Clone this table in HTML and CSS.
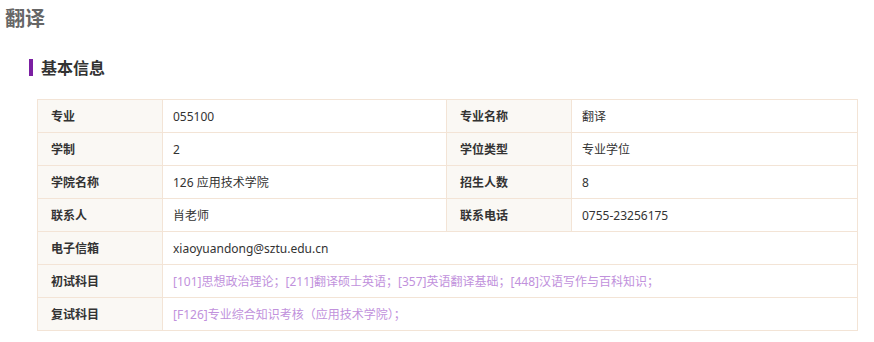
FILE: index.html
```html
<!DOCTYPE html>
<html lang="zh">
<head>
<meta charset="utf-8">
<link rel="stylesheet" href="styles.css">
</head>
<body>
<h1 class="title">翻译</h1>
<div class="section">
  <h2 class="sec-head">基本信息</h2>
  <table class="info">
    <colgroup><col class="c1"><col class="c2"><col class="c3"><col class="c4"></colgroup>
    <tr><th>专业</th><td>055100</td><th>专业名称</th><td>翻译</td></tr>
    <tr><th>学制</th><td>2</td><th>学位类型</th><td>专业学位</td></tr>
    <tr><th>学院名称</th><td>126 应用技术学院</td><th>招生人数</th><td>8</td></tr>
    <tr><th>联系人</th><td>肖老师</td><th>联系电话</th><td>0755-23256175</td></tr>
    <tr><th>电子信箱</th><td colspan="3">xiaoyuandong@sztu.edu.cn</td></tr>
    <tr><th>初试科目</th><td colspan="3" class="subj">[101]思想政治理论；[211]翻译硕士英语；[357]英语翻译基础；[448]汉语写作与百科知识；</td></tr>
    <tr><th>复试科目</th><td colspan="3" class="subj">[F126]专业综合知识考核（应用技术学院）；</td></tr>
  </table>
</div>
</body>
</html>
```
FILE: styles.css
```css
* { box-sizing: border-box; }
body {
  margin: 0;
  padding: 0;
  font-family: "Noto Sans CJK SC", "Noto Sans", sans-serif;
  color: #333;
  background: #fff;
}
.title {
  margin: 0;
  padding: 4px 0 0 5px;
  font-size: 20px;
  line-height: 28px;
  font-weight: bold;
  color: #666;
}
.section {
  padding: 0 17px 0 37px;
}
.sec-head {
  margin: 27px 0 0 -8px;
  padding-left: 8px;
  border-left: 4px solid #7b1fa2;
  font-size: 16px;
  line-height: 17px;
  height: 17px;
  font-weight: bold;
  color: #333;
  display: flex;
  align-items: center;
}
.info {
  margin-top: 23px;
  width: 820px;
  border-collapse: collapse;
  table-layout: fixed;
  font-family: "Noto Sans", "Noto Sans CJK SC", sans-serif;
  font-size: 12px;
}
.c1 { width: 125px; }
.c2 { width: 284px; }
.c3 { width: 125px; }
.c4 { width: 286px; }
.info th, .info td {
  border: 1px solid #f3e4d6;
  height: 33px;
  padding: 2px 0 0 13px;
  text-align: left;
  vertical-align: middle;
  line-height: 18px;
}
.info th {
  background: #faf8f4;
  font-weight: bold;
  color: #333;
}
.info td {
  color: #333;
  padding-left: 10px;
}
.info td.subj {
  color: #c191dc;
}
```
